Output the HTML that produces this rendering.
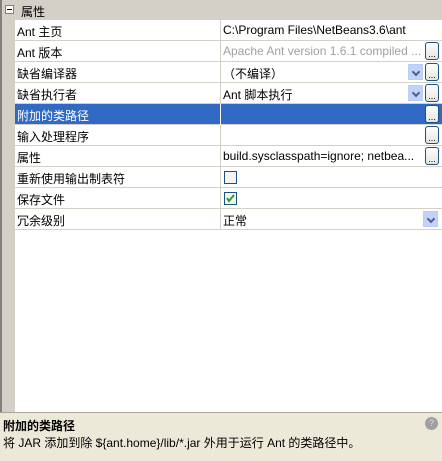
<!DOCTYPE html>
<html><head><meta charset="utf-8"><style>
*{margin:0;padding:0;box-sizing:border-box}
body{width:442px;height:461px;overflow:hidden;background:#d4d0c8;font-family:"Liberation Sans","WenQuanYi Zen Hei","Noto Sans CJK SC",sans-serif;font-size:12px;position:relative}
.left{position:absolute;left:0;top:0;width:2px;height:412px;background:#808080}
.hdr{position:absolute;left:0;top:0;width:442px;height:20px}
.minus{position:absolute;left:5px;top:5px;width:9px;height:9px;border:1px solid #808080;background:#fff}
.minus:after{content:"";position:absolute;left:1px;top:3px;width:5px;height:1px;background:#000}
.hdr span{position:absolute;left:21px;top:3px}
.grid{position:absolute;left:15px;top:20px;width:427px;height:392px;background:#fff}
.row{position:absolute;left:0;width:427px;height:21px;border-bottom:1px solid #d4d0c8}
.k{position:absolute;left:2px;top:3px;white-space:nowrap}
.v{position:absolute;left:208px;top:3px;white-space:nowrap}
.div{position:absolute;left:205px;top:0;width:1px;height:21px;background:#d4d0c8}
.sel{background:#316ac5;color:#fff}
.btn{position:absolute;left:410px;top:1px;width:14px;height:18px;border:1px solid #1c5180;border-radius:3px;background:linear-gradient(#fff,#e6e4dc);font-size:9px;line-height:22px;text-align:center;color:#000}
.arr{position:absolute;left:393px;top:2px;width:15px;height:16px;background:#c1d3fb;border:1px solid #b9cdf6}
.arr:after{content:"";position:absolute;left:4px;top:4px;width:4px;height:4px;border-right:2px solid #4d6185;border-bottom:2px solid #4d6185;transform:rotate(45deg)}
.cb{position:absolute;left:209px;top:4px;width:13px;height:13px;border:1px solid #1c5180;background:#f4f4f0}
.bot{position:absolute;left:0;top:412px;width:442px;height:49px;background:#ece9d8;border-top:1px solid #aca899}
.help{position:absolute;left:425px;top:4px;width:13px;height:13px;border-radius:50%;background:#a0a0a0;color:#ddd;font-size:9px;text-align:center;line-height:13px}
</style></head><body>
<div class="left"></div>
<div class="hdr"><div class="minus"></div><span>属性</span></div>
<div class="grid">
<div class="row" style="top:0"><span class="k">Ant 主页</span><div class="div"></div><span class="v">C:\Program Files\NetBeans3.6\ant</span></div>
<div class="row" style="top:21px"><span class="k">Ant 版本</span><div class="div"></div><span class="v" style="color:#a0a0a0">Apache Ant version 1.6.1 compiled ...</span><div class="btn">...</div></div>
<div class="row" style="top:42px"><span class="k">缺省编译器</span><div class="div"></div><span class="v">（不编译）</span><div class="arr"></div><div class="btn">...</div></div>
<div class="row" style="top:63px"><span class="k">缺省执行者</span><div class="div"></div><span class="v">Ant 脚本执行</span><div class="arr"></div><div class="btn">...</div></div>
<div class="row sel" style="top:84px"><span class="k">附加的类路径</span><div class="div" style="background:#fff"></div><div class="btn">...</div></div>
<div class="row" style="top:105px"><span class="k">输入处理程序</span><div class="div"></div><div class="btn">...</div></div>
<div class="row" style="top:126px"><span class="k">属性</span><div class="div"></div><span class="v">build.sysclasspath=ignore; netbea...</span><div class="btn">...</div></div>
<div class="row" style="top:147px"><span class="k">重新使用输出制表符</span><div class="div"></div><div class="cb"></div></div>
<div class="row" style="top:168px"><span class="k">保存文件</span><div class="div"></div><div class="cb"><svg width="11" height="11" style="position:absolute;left:0;top:0"><path d="M2 5l2 3 5-6" stroke="#21a121" stroke-width="2" fill="none"/></svg></div></div>
<div class="row" style="top:189px"><span class="k">冗余级别</span><div class="div"></div><span class="v">正常</span><div class="arr" style="left:408px"></div></div>
</div>
<div class="bot"><div style="position:absolute;left:3px;top:4px;font-weight:bold">附加的类路径</div><div class="help">?</div><div style="position:absolute;left:3px;top:21px">将 JAR 添加到除 ${ant.home}/lib/*.jar 外用于运行 Ant 的类路径中。</div></div>
</body></html>
